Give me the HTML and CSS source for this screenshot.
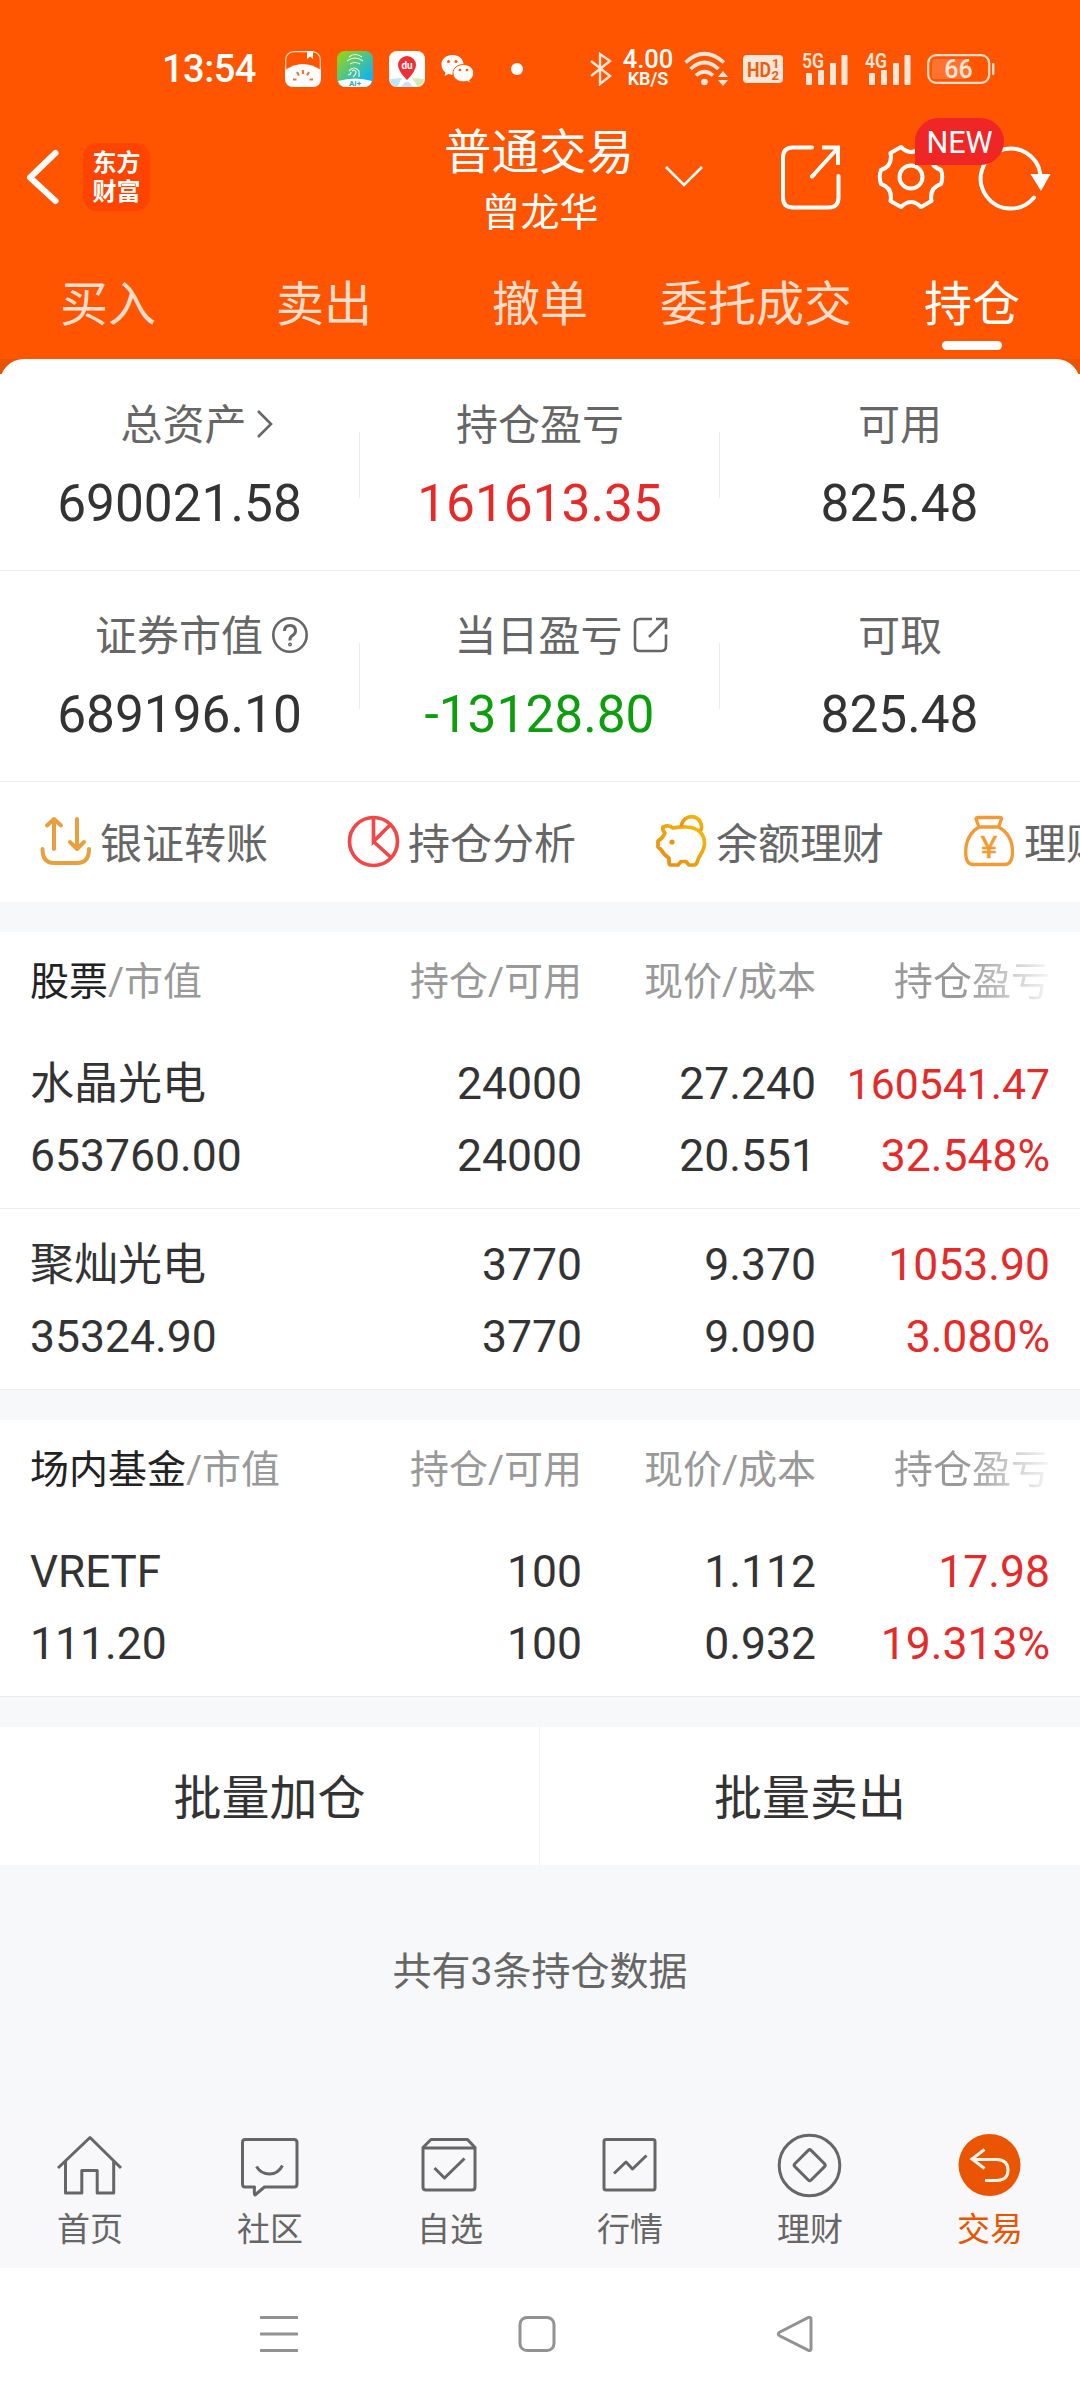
FILE: index.html
```html
<!DOCTYPE html>
<html lang="zh-CN">
<head>
  <meta charset="UTF-8" />
  <title>普通交易 | 持仓</title>
  <link rel="stylesheet" href="styles.css">
</head>
<body>

  <!-- Header -->
  <header>
    <div class="status-bar">
      <span class="time">13:54</span>
      <div class="status-apps">
        <svg width="36" height="36" viewBox="0 0 36 36">
          <rect x="0.7" y="0.7" width="34.6" height="34.6" rx="8" fill="none" stroke="#ffd9c4" stroke-width="1.2"/>
          <path d="M0 19Q18 7 36 19V27Q36 36 27 36H9Q0 36 0 27Z" fill="#fff"/>
          <path d="M22 0h6v8l-3-2.5L22 8z" fill="#fff"/>
          <path d="M18 19v4M12 21l2 3.5M24 21l-2 3.5M8 28.5h3.5M24.500 28.500H28" stroke="#e8783c" stroke-width="2.2"/>
        </svg>
        <svg width="36" height="36" viewBox="0 0 36 36">
          <defs>
            <linearGradient id="wifiBg" x1="0" y1="0" x2="1" y2="1">
              <stop offset="0.1" stop-color="#8fd320"/>
              <stop offset="0.8" stop-color="#12b5ee"/>
            </linearGradient>
          </defs>
          <rect width="36" height="36" rx="8" fill="url(#wifiBg)"/>
          <path d="M1 30Q18 25 35 30Q33 36 27 36H9Q3 36 1 30z" fill="#fff"/>
          <path d="M12 6q6-5 13 0M10 10q8-6 16 0M13 13q5-3 10 0M12 20q5-6 10 0v6M15 20q3-2 4 1 0 3-3 5M11 24q3 0 3-3" fill="none" stroke="#e3fbe0" stroke-width="1.2"/>
          <text x="18" y="34.500" class="ai-text" text-anchor="middle">AI+</text>
        </svg>
        <svg width="36" height="36" viewBox="0 0 36 36">
          <rect width="36" height="36" rx="8" fill="#fff"/>
          <path d="M1 28l12-1-5 9q-6-1-7-8z" fill="#bfe3fa"/>
          <path d="M35 28l-12-1 6 9q5-1 6-8z" fill="#d2ecb4"/>
          <path d="M16 31h4l4 5H12z" fill="#bfe3fa"/>
          <path d="M18 29Q9 20 9 14a9 9 0 0 1 18 0q0 6-9 15z" fill="#ee2f36"/>
          <text x="18" y="17.500" class="du-text" text-anchor="middle">du</text>
        </svg>
        <svg class="wechat" width="34" height="30" viewBox="0 0 34 30" fill="#fff">
          <path d="M11.500 1C5 1 0.500 5 0.500 10.500c0 3.500 1.500 6 4 8L3.500 22l4-2q2 .8 4 .8C18 20.800 22.500 16 22.500 10.500S18 1 11.500 1z"/>
          <path d="M22.500 10.500c-6 0-10.500 3.700-10.500 8.700s4.500 8.600 10.500 8.600q2 0 3.600-.6l3.400 2-.8-3.200c2.600-1.600 4-4 4-6.800 0-5-4.400-8.700-10.200-8.700z" stroke="#ff5500" stroke-width="1"/>
          <g fill="#ff5500"><circle cx="7.500" cy="7.500" r="1.500"/><circle cx="15" cy="7.500" r="1.500"/><circle cx="19" cy="16" r="1.300"/><circle cx="26" cy="16" r="1.300"/></g>
        </svg>
      </div>
      <span class="dot"></span>
      <div class="status-right">
        <svg width="22" height="34" viewBox="0 0 22 34" fill="none" stroke="#ffe6d9" stroke-width="2.400">
          <path d="M1 9l19 15-10 8V2l10 7L1 24"/>
        </svg>
        <div class="speed"><b>4.00</b><small>KB/S</small></div>
        <svg class="wifi" width="45" height="36" viewBox="0 0 45 36">
          <g fill="none" stroke="#ffe6d9" stroke-width="3.600">
            <path d="M1.500 11.500Q20 -6 40 11.500"/>
            <path d="M6.500 18Q20.500 5 34.500 18"/>
            <path d="M12 24.500Q20.500 17 29 24.500"/>
          </g>
          <circle cx="20.500" cy="31" r="3.300" fill="#ffe6d9"/>
          <path d="M39 20l5 6H34zM39 35l-5-6h10z" fill="#ffe6d9"/>
        </svg>
        <svg class="hd" width="40" height="28" viewBox="0 0 40 28">
          <rect width="40" height="28" rx="4" fill="#ffe6d9"/>
          <text x="4" y="21.500" class="hd-text" textLength="24" lengthAdjust="spacingAndGlyphs">HD</text>
          <text x="29" y="13" class="hd-num">1</text>
          <text x="28.500" y="25" class="hd-num">2</text>
        </svg>
        <svg class="signal" width="48" height="38" viewBox="0 -2 48 38" fill="#ffe6d9">
          <text x="0" y="15.500" class="net-text" textLength="22" lengthAdjust="spacingAndGlyphs">5G</text>
          <rect x="4" y="21" width="6" height="12" rx="1"/>
          <rect x="16" y="18" width="6" height="15" rx="1"/>
          <rect x="28" y="11" width="6" height="22" rx="1"/>
          <rect x="39.500" y="3" width="6" height="30" rx="1"/>
        </svg>
        <svg class="signal" width="48" height="38" viewBox="0 -2 48 38" fill="#ffe6d9">
          <text x="0" y="15.500" class="net-text" textLength="22" lengthAdjust="spacingAndGlyphs">4G</text>
          <rect x="4" y="21" width="6" height="12" rx="1"/>
          <rect x="16" y="18" width="6" height="15" rx="1"/>
          <rect x="28" y="11" width="6" height="22" rx="1"/>
          <rect x="39.500" y="3" width="6" height="30" rx="1"/>
        </svg>
        <svg class="battery" width="68" height="30" viewBox="0 0 68 30">
          <rect x="5" y="5" width="36" height="20" rx="3" fill="#ff7330"/>
          <rect x="1.200" y="1.200" width="61" height="27.600" rx="8" fill="none" stroke="#ffdcc9" stroke-width="2.200"/>
          <rect x="65" y="9" width="2.400" height="12" rx="1" fill="#ffdcc9"/>
          <text x="31.500" y="23.500" class="battery-text" text-anchor="middle">66</text>
        </svg>
      </div>
    </div>

    <div class="title-bar">
      <div class="title-left">
        <svg width="36" height="60" viewBox="0 0 36 60" fill="none" stroke="#fff" stroke-width="6" stroke-linecap="round" stroke-linejoin="round">
          <path d="M30.500 6L5 30.500 30.500 54"/>
        </svg>
        <div class="logo">东方<br>财富</div>
      </div>
      <div class="title">
        <h1>普通交易</h1>
        <p>曾龙华</p>
      </div>
      <div class="title-right">
        <svg class="arrow-down" width="40" height="24" viewBox="0 0 40 24" fill="none" stroke="#fff" stroke-width="2.600">
          <path d="M2 2l18 18L38 2"/>
        </svg>
        <svg class="share" width="64" height="68" viewBox="0 0 64 68" fill="none" stroke="#fff" stroke-width="4" stroke-linecap="round">
          <path d="M33 4.500H14Q4 4.500 4 14.500V54.500Q4 64.500 14 64.500H49.500Q59.500 64.500 59.500 54.500V33"/>
          <path d="M33 33.500L58 6M43 4.500H59V22" stroke-linecap="butt"/>
          <path d="M33 33.500l2-2"/>
        </svg>
        <div class="gear">
          <svg width="68" height="68" viewBox="0 0 68 68" fill="none" stroke="#fff" stroke-width="4" stroke-linejoin="round">
            <path d="M24 4L13.500 10Q16 23 4 27Q1.500 34 4 41Q16 45 13.500 58L24 64Q34 54 44 64L54.500 58Q52 45 64 41Q66.500 34 64 27Q52 23 54.500 10L44 4Q34 14 24 4Z"/>
            <circle cx="34" cy="34" r="11.500"/>
          </svg>
          <span class="badge">NEW</span>
        </div>
        <svg class="refresh" width="74" height="68" viewBox="0 0 74 68">
          <path d="M56 54.500A30 30 0 1 1 62.500 32" fill="none" stroke="#fff" stroke-width="4" stroke-linecap="round"/>
          <path d="M52.500 31H72.500L63 48z" fill="#fff"/>
        </svg>
      </div>
    </div>

    <nav class="tabs">
      <a>买入</a>
      <a>卖出</a>
      <a>撤单</a>
      <a>委托成交</a>
      <a class="active">持仓</a>
    </nav>
  </header>

  <!-- Assets -->
  <section class="summary">
    <div class="summary-card">
      <div class="summary-row">
        <div class="cell">
          <div class="label shift-more">总资产<svg class="more" width="20" height="32" viewBox="0 0 20 32" fill="none" stroke="#666" stroke-width="2.600"><path d="M3 3l13 13L3 29"/></svg></div>
          <div class="value">690021.58</div>
        </div>
        <div class="cell">
          <div class="label">持仓盈亏</div>
          <div class="value red">161613.35</div>
        </div>
        <div class="cell">
          <div class="label">可用</div>
          <div class="value">825.48</div>
        </div>
      </div>
      <div class="summary-row">
        <div class="cell">
          <div class="label shift">证券市值<svg class="help" width="38" height="38" viewBox="0 0 38 38" fill="none" stroke="#666" stroke-width="2.600"><circle cx="19" cy="19" r="16.700"/><path d="M13.500 15Q13.500 9.500 19 9.500T24.500 15Q24.500 17.500 21.500 19.500T19 24.500" stroke-width="3"/><circle cx="19" cy="28.500" r="0.700"/></svg></div>
          <div class="value">689196.10</div>
        </div>
        <div class="cell">
          <div class="label shift-link">当日盈亏<svg class="link" width="38" height="38" viewBox="0 0 38 38" fill="none" stroke="#666" stroke-width="2.600"><path d="M20 3H8Q3 3 3 8V30Q3 35 8 35H29Q34 35 34 30V18.500M17 21L33.500 4M24 3H34V13"/></svg></div>
          <div class="value green">-13128.80</div>
        </div>
        <div class="cell">
          <div class="label">可取</div>
          <div class="value">825.48</div>
        </div>
      </div>

      <div class="tools">
        <div class="tool">
          <svg width="54" height="54" viewBox="0 0 54 54" fill="none" stroke="#e8a03c" stroke-width="4" stroke-linecap="round" stroke-linejoin="round">
            <path d="M16 35V5M9 11.500L16 5l7 6.500M39 5V35M32 28l7 7 7-7M4.500 35Q4.500 49 16 49H39Q51 49 51 35"/>
          </svg>
          <span>银证转账</span>
        </div>
        <div class="tool">
          <svg width="54" height="54" viewBox="0 0 54 54" fill="none" stroke="#f04848" stroke-width="3.700">
            <circle cx="27.500" cy="27.500" r="24"/><path d="M27.500 4V27.500L44 11M27.500 27.500L45 43.500"/>
          </svg>
          <span>持仓分析</span>
        </div>
        <div class="tool">
          <svg width="54" height="54" viewBox="0 0 54 54" fill="none" stroke="url(#pigLine)" stroke-width="3.700" stroke-linejoin="round">
            <defs>
              <linearGradient id="pigLine" x1="0" y1="1" x2="1" y2="0">
                <stop offset="0" stop-color="#e68a14"/>
                <stop offset="1" stop-color="#f5bb0c"/>
              </linearGradient>
            </defs>
            <path d="M9 13Q15 10.500 19 14Q26 12.500 33 13C44 13.500 50.500 20 50.500 29C50.500 38 45 41 43.500 47Q42.500 51 40 51H35L32 47.500H27L24 51H17Q15 51 15 48V44Q10 41 7 35.500L4 33V27Q9 24 11 19Q8 16 9 13Z"/>
            <path d="M27.500 12.500A10 10 0 1 1 46.500 17"/>
            <circle cx="18" cy="28" r="2.600" fill="#e99414" stroke="none"/>
          </svg>
          <span>余额理财</span>
        </div>
        <div class="tool">
          <svg width="54" height="54" viewBox="0 0 54 54" fill="none" stroke="#f39a35" stroke-width="3.300" stroke-linejoin="round">
            <path d="M17 13L14 5Q14 3.500 16 3.500H37.500Q40 3.500 39.500 5L36.500 13Q51 21 50.500 39Q50 50.500 43 50.500H11Q4 50.500 3.700 39Q3.500 21 17 13ZM17 13H36.500"/>
            <text x="27" y="44" class="yuan" text-anchor="middle">¥</text>
          </svg>
          <span>理财</span>
        </div>
      </div>
    </div>
  </section>

  <!-- Stocks -->
  <section class="holdings">
    <div class="row head">
      <span><b>股票</b>/市值</span><span>持仓/可用</span><span>现价/成本</span><span class="fade">持仓盈亏</span>
    </div>
    <div class="row">
      <span class="name">水晶光电</span><span>24000</span><span>27.240</span><span class="red small">160541.47</span>
      <span>653760.00</span><span>24000</span><span>20.551</span><span class="red">32.548%</span>
    </div>
    <div class="row">
      <span class="name">聚灿光电</span><span>3770</span><span>9.370</span><span class="red">1053.90</span>
      <span>35324.90</span><span>3770</span><span>9.090</span><span class="red">3.080%</span>
    </div>
  </section>

  <!-- Funds -->
  <section class="holdings">
    <div class="row head">
      <span><b>场内基金</b>/市值</span><span>持仓/可用</span><span>现价/成本</span><span class="fade">持仓盈亏</span>
    </div>
    <div class="row">
      <span class="name">VRETF</span><span>100</span><span>1.112</span><span class="red">17.98</span>
      <span>111.20</span><span>100</span><span>0.932</span><span class="red">19.313%</span>
    </div>
  </section>

  <div class="batch">
    <button>批量加仓</button>
    <button>批量卖出</button>
  </div>

  <p class="total">共有3条持仓数据</p>

  <!-- Bottom tabs -->
  <footer>
    <a>
      <svg width="70" height="70" viewBox="0 0 70 70"><path d="M3 38L35 7.500 66 38M10.500 31V63H26.800V40.500H42.200V63H58.700V31"/></svg>
      首页
    </a>
    <a>
      <svg width="70" height="70" viewBox="0 0 70 70"><path d="M10 9.500H59Q62 9.500 62 12.500V54Q62 57 59 57H29.500L20 65Q19 65 19.500 57H10Q7.500 57 7.500 54V12.500Q7.500 9.500 10 9.500Z"/><path d="M21.500 36.500Q26 44 34.500 44T47.500 35.500"/></svg>
      社区
    </a>
    <a>
      <svg width="70" height="70" viewBox="0 0 70 70"><path d="M8 17.500L16 9.500H52.500L60 17.500V57Q60 60 57 60H11Q8 60 8 57ZM8 18H60M19.500 38L29.500 48 49.500 28.500"/></svg>
      自选
    </a>
    <a>
      <svg width="70" height="70" viewBox="0 0 70 70"><rect x="9" y="9.500" width="51" height="50.500" rx="2"/><path d="M19 43.500L31 32 37.500 39 51.500 25.500"/></svg>
      行情
    </a>
    <a>
      <svg width="70" height="70" viewBox="0 0 70 70"><circle cx="34.500" cy="35.500" r="30.300"/><rect x="23.200" y="23.700" width="23" height="23" rx="2" transform="rotate(45 34.700 35.200)"/></svg>
      理财
    </a>
    <a class="active">
      <svg width="70" height="70" viewBox="0 0 70 70"><circle cx="34.500" cy="35" r="31" class="fill"/><path class="line" d="M29.500 19.500L17 29 29.500 38.500M17 29.500H42Q53 30 53 40T42 50.500H30"/></svg>
      交易
    </a>
  </footer>

  <div class="system-nav">
    <svg width="38" height="38" viewBox="0 0 38 38"><path d="M1 2.500H37M1 19H37M1 35.500H37"/></svg>
    <svg width="38" height="38" viewBox="0 0 38 38"><rect x="2" y="2.500" width="34" height="33" rx="7"/></svg>
    <svg width="38" height="38" viewBox="0 0 38 38"><path d="M32 2.700Q35 1.500 35 4.500V33.500Q35 36.500 32 35.200L4 21Q0.500 19 4 17Z"/></svg>
  </div>

</body>
</html>
```

FILE: styles.css
```css
* {
  box-sizing: border-box;
  margin: 0;
  padding: 0;
}

body {
  width: 1080px;
  height: 2400px;
  overflow: hidden;
  display: flex;
  flex-direction: column;
  background: #f7f8fa;
  color: #333;
  font-family: Roboto, "Noto Sans CJK SC", sans-serif;
}

svg {
  display: block;
  flex-shrink: 0;
}

.red {
  color: #e52a2a;
}

.green {
  color: #0c9e0c;
}

/* Header */
header {
  height: 359px;
  background: #ff5500;
  color: #fff;
}

.status-bar {
  display: flex;
  align-items: center;
  height: 118px;
  padding: 20px 0 0 162px;
}

.time {
  width: 123px;
  font-size: 38px;
  font-weight: 500;
  letter-spacing: -0.5px;
}

.status-apps {
  display: flex;
  align-items: center;
  gap: 16px;
}

.dot {
  width: 12px;
  height: 12px;
  margin-left: 36px;
  border-radius: 50%;
  background: #fff;
}

.status-right {
  display: flex;
  align-items: center;
  margin-left: 67px;
}

.speed {
  width: 54px;
  margin-left: 9px;
  text-align: center;
}

.speed b,
.speed small {
  display: block;
}

.speed b {
  font-size: 25.5px;
  line-height: 19px;
  font-weight: 500;
}

.speed small {
  margin-top: 1px;
  font-size: 18px;
  line-height: 18px;
  font-weight: 600;
}

.wifi {
  margin-left: 9px;
}

.hd {
  margin-left: 14px;
}

.signal {
  margin-left: 19px;
}

.signal + .signal {
  margin-left: 15px;
}

.battery {
  margin-left: 14px;
}

.ai-text {
  font-size: 8px;
  font-weight: 700;
  fill: #2fa8c8;
}

.du-text {
  font-size: 10px;
  font-weight: 700;
  fill: #fff;
}

.hd-text {
  font-size: 21px;
  font-weight: 700;
  fill: #e8600f;
}

.hd-num {
  font-size: 13px;
  font-weight: 700;
  fill: #e8600f;
}

.net-text {
  font-size: 20px;
  font-weight: 600;
}

.battery-text {
  font-size: 25px;
  font-weight: 500;
  fill: #ffe6d9;
}

.title-bar {
  display: grid;
  grid-template-columns: 444px 192px 444px;
  grid-template-rows: 118px;
  align-items: center;
}

.title-left {
  display: flex;
  align-items: center;
  gap: 22px;
  padding-left: 25px;
}

.logo {
  width: 67px;
  height: 68px;
  padding-top: 6px;
  border-radius: 14px;
  background: #ff4400;
  font-size: 24px;
  font-weight: 700;
  line-height: 29px;
  text-align: center;
}

.title {
  padding-top: 11px;
  text-align: center;
}

.title h1 {
  margin-left: -2px;
  font-size: 47.5px;
  font-weight: 400;
  line-height: 61px;
}

.title p {
  font-size: 39px;
  line-height: 59px;
}

.title-right {
  display: flex;
  align-items: center;
}

.arrow-down {
  margin-left: 28px;
}

.share {
  margin-left: 75px;
}

.gear {
  position: relative;
  margin-left: 34px;
}

.badge {
  position: absolute;
  left: 38px;
  top: -25px;
  width: 89px;
  height: 47px;
  border-radius: 24px 24px 24px 0;
  background: #f02525;
  font-size: 30.5px;
  line-height: 49px;
  text-align: center;
}

.refresh {
  margin-left: 33px;
}

.tabs {
  display: flex;
}

.tabs a {
  display: flex;
  flex-direction: column;
  align-items: center;
  width: 216px;
  padding-top: 35px;
  font-size: 48px;
  line-height: 68px;
  color: #ffddcc;
}

.tabs .active {
  color: #fff;
}

.tabs .active::after {
  content: "";
  width: 60px;
  height: 9px;
  margin-top: 2px;
  border-radius: 5px;
  background: #fff;
}

/* Assets */
.summary {
  background: linear-gradient(#e85500 15px, #fff 15px);
}

.summary-card {
  height: 543px;
  border-radius: 24px 24px 0 0;
  background: #fff;
}

.summary-row {
  display: flex;
  height: 212px;
  padding-top: 37px;
  border-bottom: 1px solid #ececec;
}

.summary-row + .summary-row {
  height: 211px;
  padding-top: 36px;
}

.cell {
  width: 360px;
  text-align: center;
  background: linear-gradient(#ececec, #ececec) right 36px / 1px 66px no-repeat;
}

.cell:last-child {
  background: none;
}

.label {
  display: flex;
  justify-content: center;
  align-items: center;
  height: 60px;
  margin-bottom: 18px;
  font-size: 42px;
  line-height: 60px;
  color: #666;
}

.value {
  padding-right: 1px;
  font-size: 51.4px;
  line-height: 60px;
}

.more {
  margin: 0 0 5px 8px;
}

.help {
  margin: 0 0 5px 8px;
}

.link {
  margin: 0 0 4px 9px;
}

.shift {
  padding-left: 44px;
}

.shift-more {
  padding-left: 35px;
}

.shift-link {
  padding-left: 44px;
}

.tools {
  display: flex;
  overflow: hidden;
  padding: 0 0 2px 38px;
}

.tool {
  display: flex;
  flex-shrink: 0;
  align-items: center;
  gap: 8px;
  width: 308px;
  height: 118px;
  font-size: 42px;
  color: #666;
  white-space: nowrap;
}

.tool span {
  padding-bottom: 2px;
}

.yuan {
  font-size: 32px;
  fill: #f39a35;
  stroke-width: 0.5px;
}

/* Holdings */
.holdings {
  margin-top: 30px;
  background: #fff;
}

.row {
  display: grid;
  grid-template-columns: 316px 236px 234px 234px;
  align-content: start;
  height: 181px;
  padding: 20px 30px 0;
  border-bottom: 1px solid #ececec;
  font-size: 44.5px;
  line-height: 72px;
}

.row span {
  text-align: right;
  white-space: nowrap;
}

.row span:nth-child(4n+1) {
  text-align: left;
}

.row .name {
  font-size: 44px;
}

.row .small {
  font-size: 42.7px;
}

.head {
  height: 96px;
  padding-top: 14px;
  border-bottom: none;
  font-size: 39px;
  color: #999;
}

.head b {
  font-weight: 400;
  color: #222;
}

.row .fade {
  justify-self: end;
  background: linear-gradient(90deg, #999 45%, #fff 105%);
  -webkit-background-clip: text;
  background-clip: text;
  color: transparent;
}

.batch {
  display: flex;
  height: 138px;
  margin-top: 30px;
  background: #fff;
}

.batch button {
  width: 540px;
  padding-bottom: 4px;
  border: none;
  background: none;
  font-family: inherit;
  font-size: 48px;
  color: #333;
}

.batch button:first-child {
  border-right: 1px solid #f3f3f3;
}

.total {
  padding-top: 77px;
  font-size: 39px;
  line-height: 60px;
  text-align: center;
  color: #666;
}

/* Bottom tabs */
footer {
  display: flex;
  height: 153px;
  margin-top: auto;
  padding-top: 15px;
  background: #f8f8fa;
}

footer a {
  display: flex;
  flex-direction: column;
  align-items: center;
  gap: 5px;
  width: 180px;
  font-size: 33px;
  line-height: 50px;
  color: #666;
}

footer svg {
  fill: none;
  stroke: #666;
  stroke-width: 3;
  stroke-linejoin: round;
}

footer .active {
  color: #e85500;
}

footer .fill {
  fill: #ea5504;
  stroke: none;
}

footer .line {
  stroke: #fff3ea;
  stroke-linejoin: miter;
}

.system-nav {
  display: flex;
  gap: 220px;
  height: 132px;
  padding: 47px 0 0 260px;
  background: #fff;
}

.system-nav svg {
  fill: none;
  stroke: #929292;
  stroke-width: 3;
  stroke-linecap: round;
}
```
